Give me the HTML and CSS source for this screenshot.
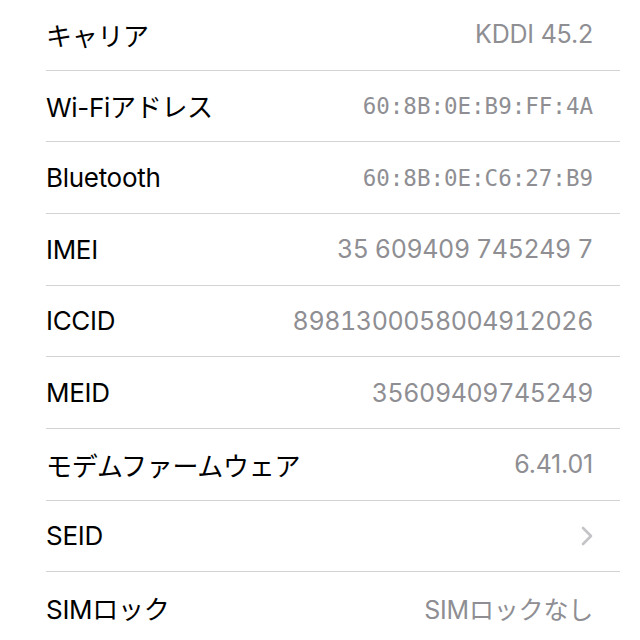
FILE: index.html
```html
<!DOCTYPE html>
<html lang="ja">
<head>
    <meta charset="UTF-8">
    <meta name="viewport" content="width=device-width, initial-scale=1.0">
    <title>情報</title>
    <link rel="stylesheet" href="styles.css">
</head>
<body>

    <ul class="info-list">
        <li class="row"><span class="label">キャリア</span><span class="value">KDDI 45.2</span></li>
        <li class="row"><span class="label">Wi-Fiアドレス</span><span class="value mac">60:8B:0E:B9:FF:4A</span></li>
        <li class="row"><span class="label">Bluetooth</span><span class="value mac">60:8B:0E:C6:27:B9</span></li>
        <li class="row"><span class="label">IMEI</span><span class="value digits">35 609409 745249 7</span></li>
        <li class="row"><span class="label">ICCID</span><span class="value digits">8981300058004912026</span></li>
        <li class="row"><span class="label">MEID</span><span class="value digits">35609409745249</span></li>
        <li class="row"><span class="label">モデムファームウェア</span><span class="value">6.41.01</span></li>
        <li class="row">
            <span class="label">SEID</span>
            <svg class="chevron" width="12" height="20" viewBox="0 0 12 20">
                <path d="M2 2 L10 10 L2 18" fill="none" stroke="#c4c4c8" stroke-width="2.6" stroke-linecap="round" stroke-linejoin="round"/>
            </svg>
        </li>
        <li class="row"><span class="label">SIMロック</span><span class="value">SIMロックなし</span></li>
    </ul>

</body>
</html>
```

FILE: styles.css
```css
body {
    margin: 0;
    background: #ffffff;
    font-family: "Inter", "Noto Sans CJK JP", sans-serif;
    overflow: hidden;
}

.info-list {
    list-style: none;
    margin: -1px 20px 0 46px;
    padding: 0;
}

.row {
    display: flex;
    justify-content: space-between;
    align-items: center;
    height: 70.67px;
    padding-right: 27px;
    border-bottom: 1px solid #d3d3d6;
}

.label {
    font-size: 26px;
    color: #000000;
    letter-spacing: -0.3px;
}

.value {
    font-size: 25px;
    color: #8e8e93;
    letter-spacing: -0.2px;
}

.digits {
    font-variant-numeric: tabular-nums;
    letter-spacing: -0.4px;
}

.mac {
    font-family: "DejaVu Sans Mono", monospace;
    font-size: 22.5px;
    letter-spacing: 0;
}

.chevron {
    display: block;
}
```
